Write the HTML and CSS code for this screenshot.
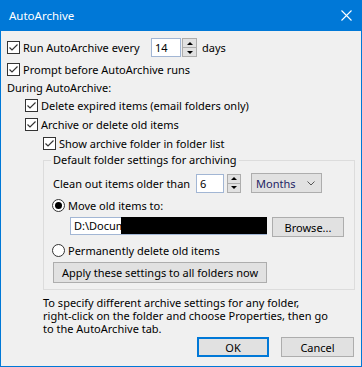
FILE: index.html
```html
<!DOCTYPE html>
<html lang="en">
<head>
    <meta charset="UTF-8">
    <title>AutoArchive</title>
    <link rel="stylesheet" href="styles.css">
</head>
<body>
    <div class="window">
        <div class="titlebar">
            <span class="title">AutoArchive</span>
            <svg class="close" width="11" height="11" viewBox="0 0 11 11">
                <path d="M0.5 0.5 L10.5 10.5 M10.5 0.5 L0.5 10.5" stroke="#fff" stroke-width="1.1" fill="none"/>
            </svg>
        </div>
        <div class="content">
            <div class="row run">
                <span class="check"><svg width="11" height="11" viewBox="0 0 11 11"><path d="M1.5 5.5 L4 8 L9.5 2.5" stroke="#333" stroke-width="1.2" fill="none"/></svg></span>
                <span class="run-label">Run AutoArchive every</span>
                <span class="textbox days-box">14</span>
                <span class="spin"><span class="spin-up"></span><span class="spin-down"></span></span>
                <span class="after">days</span>
            </div>
            <div class="row prompt">
                <span class="check"><svg width="11" height="11" viewBox="0 0 11 11"><path d="M1.5 5.5 L4 8 L9.5 2.5" stroke="#333" stroke-width="1.2" fill="none"/></svg></span>
                <span>Prompt before AutoArchive runs</span>
            </div>
            <div class="section-label">During AutoArchive:</div>
            <div class="indent">
                <div class="row sub">
                    <span class="check"><svg width="11" height="11" viewBox="0 0 11 11"><path d="M1.5 5.5 L4 8 L9.5 2.5" stroke="#333" stroke-width="1.2" fill="none"/></svg></span>
                    <span>Delete expired items (email folders only)</span>
                </div>
                <div class="row sub">
                    <span class="check"><svg width="11" height="11" viewBox="0 0 11 11"><path d="M1.5 5.5 L4 8 L9.5 2.5" stroke="#333" stroke-width="1.2" fill="none"/></svg></span>
                    <span>Archive or delete old items</span>
                </div>
                <div class="indent">
                    <div class="row sub">
                        <span class="check"><svg width="11" height="11" viewBox="0 0 11 11"><path d="M1.5 5.5 L4 8 L9.5 2.5" stroke="#333" stroke-width="1.2" fill="none"/></svg></span>
                        <span>Show archive folder in folder list</span>
                    </div>
                </div>
            </div>

            <fieldset class="group">
                <legend>Default folder settings for archiving</legend>
                <div class="row clean">
                    <span class="clean-label">Clean out items older than</span>
                    <span class="textbox months-box">6</span>
                    <span class="spin spin-small"><span class="spin-up"></span><span class="spin-down"></span></span>
                    <span class="combo">Months
                        <svg width="8" height="5" viewBox="0 0 8 5"><path d="M0.5 0.5 L4 4 L7.5 0.5" stroke="#555" stroke-width="1" fill="none"/></svg>
                    </span>
                </div>
                <div class="row radio-row move">
                    <span class="radio selected"><span class="dot"></span></span>
                    <span>Move old items to:</span>
                </div>
                <div class="row path-row">
                    <span class="path-field"><span class="path-text">D:\Docum</span><span class="redact"></span></span>
                    <span class="btn browse">Browse...</span>
                </div>
                <div class="row radio-row perm">
                    <span class="radio"></span>
                    <span>Permanently delete old items</span>
                </div>
                <span class="btn apply">Apply these settings to all folders now</span>
            </fieldset>

            <div class="note">
                <div>To specify different archive settings for any folder,</div>
                <div>right-click on the folder and choose Properties, then go</div>
                <div>to the AutoArchive tab.</div>
            </div>

            <div class="dialog-buttons">
                <span class="btn default-btn">OK</span>
                <span class="btn dismiss-btn">Cancel</span>
            </div>
        </div>
    </div>
</body>
</html>
```

FILE: styles.css
```css
* {
    box-sizing: border-box;
}
body {
    margin: 0;
    background-color: #fff;
    font-family: "Noto Sans", "Open Sans", sans-serif;
    font-size: 11px;
    color: #000;
}
.window {
    width: 362px;
    height: 367px;
    border: 1px solid #0078d7;
    background-color: #f0f0f0;
}
.titlebar {
    margin: -1px -1px 0 -1px;
    height: 31px;
    background-color: #0078d7;
    display: flex;
    align-items: center;
    justify-content: space-between;
    padding: 0 10px 0 9px;
}
.title {
    color: #fff;
    font-size: 11.5px;
}
.content {
    padding: 7px 6px 0 6px;
}
.row {
    display: flex;
    align-items: center;
}
.run {
    height: 19px;
}
.prompt {
    height: 18px;
    margin-top: 3px;
}
.section-label {
    height: 17px;
    line-height: 17px;
    margin-top: 1px;
}
.indent {
    margin-left: 18px;
}
.sub {
    height: 19px;
}
.check {
    width: 13px;
    height: 13px;
    border: 1px solid #333;
    background-color: #fff;
    margin-right: 3px;
    display: flex;
}
.run-label {
    width: 128px;
}
.textbox {
    height: 19px;
    border: 1px solid #a2b6d4;
    background-color: #fff;
    padding-left: 3px;
    line-height: 17px;
}
.days-box {
    width: 30px;
}
.spin {
    width: 15px;
    height: 19px;
    margin-left: 1px;
    display: flex;
    flex-direction: column;
}
.spin-up, .spin-down {
    flex: 1;
    border: 1px solid #adadad;
    background-color: #e1e1e1;
    display: flex;
    align-items: center;
    justify-content: center;
}
.spin-down {
    border-top: none;
}
.spin-up::after {
    content: "";
    border-left: 3px solid transparent;
    border-right: 3px solid transparent;
    border-bottom: 3px solid #000;
}
.spin-down::after {
    content: "";
    border-left: 3px solid transparent;
    border-right: 3px solid transparent;
    border-top: 3px solid #000;
}
.after {
    margin-left: 5px;
}
.group {
    margin: -1px 0 0 36px;
    padding: 0 0 6px 9px;
    border: 1px solid #dcdcdc;
    min-width: 0;
}
.group legend {
    padding: 0 2px;
    margin-left: -2px;
    line-height: 16px;
}
.clean {
    height: 20px;
    margin-top: 5px;
}
.clean-label {
    width: 143px;
}
.months-box {
    width: 28px;
}
.spin-small {
    width: 14px;
    margin-left: 3px;
}
.combo {
    width: 71px;
    height: 20px;
    margin-left: 10px;
    border: 1px solid #adadad;
    background-color: #e1e1e1;
    color: #1e1e64;
    padding: 0 6px 0 4px;
    display: flex;
    align-items: center;
    justify-content: space-between;
}
.radio-row {
    height: 17px;
}
.move {
    margin-top: 4px;
}
.perm {
    margin-top: 5px;
}
.radio {
    width: 13px;
    height: 13px;
    border: 1px solid #333;
    border-radius: 50%;
    background-color: #fff;
    margin-left: -1px;
    margin-right: 3px;
    display: flex;
    align-items: center;
    justify-content: center;
}
.dot {
    width: 7px;
    height: 7px;
    border-radius: 50%;
    background-color: #000;
}
.path-row {
    height: 20px;
    margin-top: 3px;
    margin-left: 17px;
    align-items: flex-start;
}
.path-field {
    width: 197px;
    height: 18px;
    border: 1px solid #a2b6d4;
    background-color: #fff;
    display: flex;
}
.path-text {
    width: 50px;
    padding-left: 3px;
    line-height: 16px;
    white-space: nowrap;
    overflow: hidden;
}
.redact {
    flex: 1;
    background-color: #000;
    margin: -1px -1px 0 0;
}
.btn {
    display: flex;
    align-items: center;
    justify-content: center;
    flex: none;
    color: #000;
    background-color: #e1e1e1;
    border: 1px solid #adadad;
    height: 20px;
}
.browse {
    width: 72px;
    margin-left: 5px;
}
.apply {
    width: 214px;
    height: 21px;
    margin-top: 3px;
}
.note {
    margin: 6px 0 0 36px;
    line-height: 13px;
}
.dialog-buttons {
    display: flex;
    margin-top: 2px;
    padding-left: 190px;
}
.default-btn {
    width: 72px;
    margin-right: 12px;
    border: 2px solid #0078d7;
}
.dismiss-btn {
    width: 73px;
}
```
